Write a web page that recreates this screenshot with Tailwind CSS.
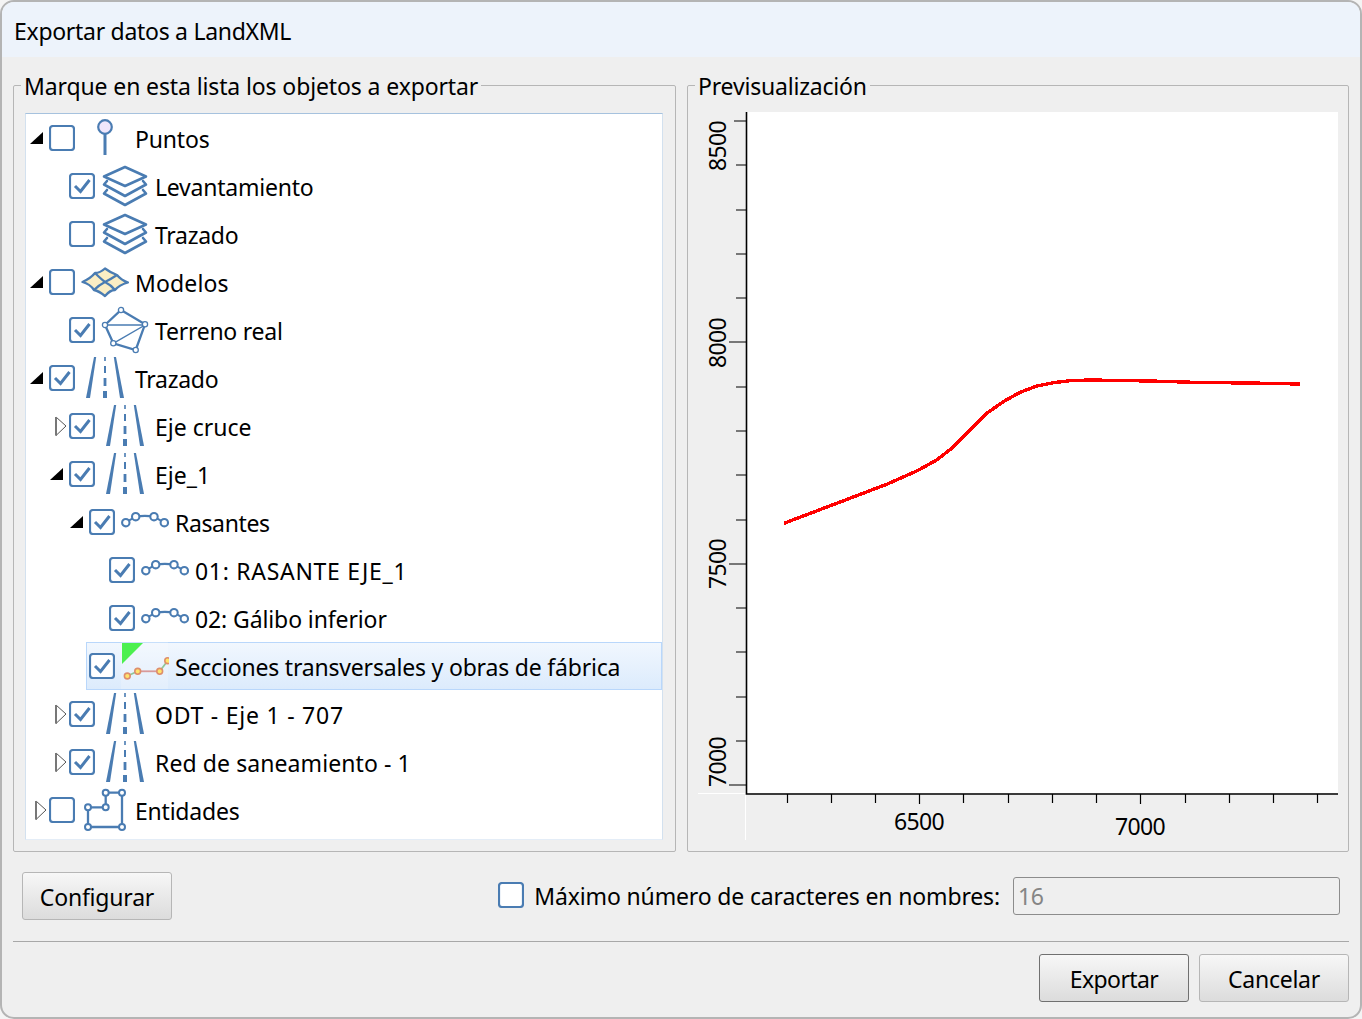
<!DOCTYPE html>
<html lang="es">
<head>
<meta charset="utf-8">
<title>Exportar datos a LandXML</title>
<script src="https://cdn.jsdelivr.net/npm/@tailwindcss/browser@4"></script>
</head>
<body class="bg-[#f4f4f4]">
<svg width="0" height="0" class="absolute">
  <defs>
    <symbol id="on" viewBox="0 0 26 26"><rect x="1" y="1" width="24" height="24" rx="3" fill="#fff" stroke="#4a7cb2" stroke-width="2.2"/><path d="M6 13 L11.5 18.5 L20.5 7" fill="none" stroke="#4a7cb2" stroke-width="3"/></symbol>
    <symbol id="off" viewBox="0 0 26 26"><rect x="1" y="1" width="24" height="24" rx="3" fill="#fff" stroke="#4a7cb2" stroke-width="2.2"/></symbol>
    <symbol id="open" viewBox="0 0 20 48"><path d="M17 18 V30 H4 Z" fill="#000"/></symbol>
    <symbol id="shut" viewBox="0 0 21 48"><path d="M10 15 V33.5 L20 24 Z" fill="#fff" stroke="#555" stroke-width="1"/><path d="M10 15 V33.5" stroke="#777" stroke-width="2"/></symbol>
    <symbol id="layers" viewBox="0 0 48 48"><g fill="none" stroke="#4a7cb2" stroke-width="2.6" stroke-linejoin="round" stroke-linecap="round"><path d="M24 5 L45 14.5 L24 24 L3 14.5 Z"/><path d="M6 19 L3 22.5 L24 34 L45 22.5 L42 19"/><path d="M6 28 L3 31.5 L24 43 L45 31.5 L42 28"/></g></symbol>
    <symbol id="road" viewBox="0 0 48 48"><g fill="#4a7cb2"><path d="M13 3 H15.2 L9 44 H5 Z"/><path d="M32.8 3 H35 L43 44 H39 Z"/><path d="M23.2 3 H24.8 V7 H23.2 Z M23 12 H25 V19 H23 Z M22.6 24 H25.4 V32 H22.6 Z M22 37 H26 V44 H22 Z"/></g></symbol>
    <symbol id="grade" viewBox="0 0 48 48"><g fill="#fff" stroke="#4a7cb2" stroke-width="2.1"><path d="M4.3 24.7 L14.7 18.7 Q24 17 33 18.7 L43.3 24.7" fill="none"/><circle cx="4.8" cy="24.7" r="3.7"/><circle cx="14.7" cy="18.7" r="3.7"/><circle cx="33" cy="18.7" r="3.7"/><circle cx="43.3" cy="24.7" r="3.7"/></g></symbol>
  </defs>
</svg>
<div class="w-[1362px] h-[1019px] flex flex-col overflow-hidden rounded-[14px] border-2 border-[#b4b4b4] bg-[#efefef] text-[23px] text-black font-['Noto_Sans','Open_Sans',sans-serif]">
  <div class="h-[55px] shrink-0 flex items-center pl-[12px] pt-[3px] bg-[#edf3fb] tracking-[-0.29px]">Exportar datos a LandXML</div>

  <div class="flex gap-[11px] mt-[28px] pl-[11px] pr-[11px]">
    <section class="relative w-[663px] h-[767px] border border-[#b6b6b6] rounded-[2px] pt-[27px] pl-[11px] pr-[12px]">
      <span class="absolute left-[7px] top-[-17px] bg-[#efefef] px-[3px] leading-[34px] whitespace-nowrap tracking-[-0.12px]">Marque en esta lista los objetos a exportar</span>
      <div class="h-[727px] bg-white border border-t-[#a6c2de] border-x-[#d3e1ef] border-b-[#e4edf7]">
        <div class="flex h-12"><svg class="w-5 h-12 shrink-0"><use href="#open"/></svg><div class="flex flex-1 items-center border border-transparent pl-[2px]"><svg class="w-[26px] h-[26px]"><use href="#off"/></svg><svg class="w-12 h-12 ml-[6px]" viewBox="0 0 48 48"><path d="M24 20 V41" stroke="#4a7cb2" stroke-width="3"/><circle cx="24" cy="13" r="6.8" fill="#efe6fb" stroke="#4a7cb2" stroke-width="2.2"/></svg><span class="ml-[6px] pt-[2px] tracking-[-0.17px]">Puntos</span></div></div>

        <div class="flex h-12 pl-5"><div class="w-5 shrink-0"></div><div class="flex flex-1 items-center border border-transparent pl-[2px]"><svg class="w-[26px] h-[26px]"><use href="#on"/></svg><svg class="w-12 h-12 ml-[6px]"><use href="#layers"/></svg><span class="ml-[6px] pt-[2px] tracking-[-0.23px]">Levantamiento</span></div></div>

        <div class="flex h-12 pl-5"><div class="w-5 shrink-0"></div><div class="flex flex-1 items-center border border-transparent pl-[2px]"><svg class="w-[26px] h-[26px]"><use href="#off"/></svg><svg class="w-12 h-12 ml-[6px]"><use href="#layers"/></svg><span class="ml-[6px] pt-[2px] tracking-[-0.29px]">Trazado</span></div></div>

        <div class="flex h-12"><svg class="w-5 h-12 shrink-0"><use href="#open"/></svg><div class="flex flex-1 items-center border border-transparent pl-[2px]"><svg class="w-[26px] h-[26px]"><use href="#off"/></svg><svg class="w-12 h-12 ml-[6px]" viewBox="0 0 48 48"><path d="M1.5 24 Q10 20 14 15 Q19 15 24 10.5 Q30 15 36 17 Q40 22 47 24.5 Q38 27 34 32 Q29 32 24 38 Q18 33 13 32 Q9 26 1.5 24 Z" fill="#fbeec4" stroke="#4a7cb2" stroke-width="2.3" stroke-linejoin="round"/><path d="M14 15 Q20 21 24 24 Q30 27 34 32 M36 17 Q30 21 24 24 Q18 27 13 32" fill="none" stroke="#4a7cb2" stroke-width="2.3"/></svg><span class="ml-[6px] pt-[2px] tracking-[0.14px]">Modelos</span></div></div>

        <div class="flex h-12 pl-5"><div class="w-5 shrink-0"></div><div class="flex flex-1 items-center border border-transparent pl-[2px]"><svg class="w-[26px] h-[26px]"><use href="#on"/></svg><svg class="w-12 h-12 ml-[6px]" viewBox="0 0 48 48"><g stroke="#4a7cb2" fill="none"><path d="M20 4 L44 18.3 L34.7 44 L12.3 37.3 L4 19 Z" stroke-width="2.3"/><path d="M4 19 H44 L12.3 37.3" stroke-width="1.4"/></g><g fill="#fff" stroke="#4a7cb2" stroke-width="1.3"><circle cx="20" cy="4" r="2.6"/><circle cx="44" cy="18.3" r="2.6"/><circle cx="34.7" cy="44" r="2.6"/><circle cx="12.3" cy="37.3" r="2.6"/><circle cx="4" cy="19" r="2.6"/></g></svg><span class="ml-[6px] pt-[2px] tracking-[-0.25px]">Terreno real</span></div></div>

        <div class="flex h-12"><svg class="w-5 h-12 shrink-0"><use href="#open"/></svg><div class="flex flex-1 items-center border border-transparent pl-[2px]"><svg class="w-[26px] h-[26px]"><use href="#on"/></svg><svg class="w-12 h-12 ml-[6px]"><use href="#road"/></svg><span class="ml-[6px] pt-[2px] tracking-[-0.29px]">Trazado</span></div></div>

        <div class="flex h-12 pl-5"><svg class="w-5 h-12 shrink-0 overflow-visible"><use href="#shut" width="21" height="48"/></svg><div class="flex flex-1 items-center border border-transparent pl-[2px]"><svg class="w-[26px] h-[26px]"><use href="#on"/></svg><svg class="w-12 h-12 ml-[6px]"><use href="#road"/></svg><span class="ml-[6px] pt-[2px]">Eje cruce</span></div></div>

        <div class="flex h-12 pl-5"><svg class="w-5 h-12 shrink-0"><use href="#open"/></svg><div class="flex flex-1 items-center border border-transparent pl-[2px]"><svg class="w-[26px] h-[26px]"><use href="#on"/></svg><svg class="w-12 h-12 ml-[6px]"><use href="#road"/></svg><span class="ml-[6px] pt-[2px]">Eje_1</span></div></div>

        <div class="flex h-12 pl-10"><svg class="w-5 h-12 shrink-0"><use href="#open"/></svg><div class="flex flex-1 items-center border border-transparent pl-[2px]"><svg class="w-[26px] h-[26px]"><use href="#on"/></svg><svg class="w-12 h-12 ml-[6px]"><use href="#grade"/></svg><span class="ml-[6px] pt-[2px] tracking-[-0.37px]">Rasantes</span></div></div>

        <div class="flex h-12 pl-[60px]"><div class="w-5 shrink-0"></div><div class="flex flex-1 items-center border border-transparent pl-[2px]"><svg class="w-[26px] h-[26px]"><use href="#on"/></svg><svg class="w-12 h-12 ml-[6px]"><use href="#grade"/></svg><span class="ml-[6px] pt-[2px] tracking-[0.7px]">01: RASANTE EJE_1</span></div></div>

        <div class="flex h-12 pl-[60px]"><div class="w-5 shrink-0"></div><div class="flex flex-1 items-center border border-transparent pl-[2px]"><svg class="w-[26px] h-[26px]"><use href="#on"/></svg><svg class="w-12 h-12 ml-[6px]"><use href="#grade"/></svg><span class="ml-[6px] pt-[2px] tracking-[-0.11px]">02: Gálibo inferior</span></div></div>

        <div class="flex h-12 pl-10"><div class="w-5 shrink-0"></div><div class="flex flex-1 items-center border border-[#b9d7fb] bg-gradient-to-b from-[#f1f7fe] to-[#dcebfc] pl-[2px]"><svg class="w-[26px] h-[26px]"><use href="#on"/></svg><svg class="w-12 h-12 ml-[6px]" viewBox="0 0 48 48"><rect x="0" y="0" width="47" height="47" fill="#fff" fill-opacity="0.2"/><path d="M1 1 H22 L1 22 Z" fill="#4cf04f"/><path d="M6.3 34 L16.7 29.3" stroke="#8fc79a" stroke-width="1.8"/><path d="M16.7 29.3 H38.7" stroke="#d89a9a" stroke-width="1.8"/><path d="M38.7 29.3 L46.7 18.7" stroke="#8fc79a" stroke-width="1.8"/><g fill="#ffe46b" stroke="#de8e6c" stroke-width="1.6"><circle cx="6.3" cy="34" r="2.9"/><circle cx="16.7" cy="29.3" r="2.9"/><circle cx="38.7" cy="29.3" r="2.9"/><circle cx="46.7" cy="18.7" r="2.9"/></g></svg><span class="ml-[6px] pt-[2px] tracking-[-0.19px]">Secciones transversales y obras de fábrica</span></div></div>

        <div class="flex h-12 pl-5"><svg class="w-5 h-12 shrink-0 overflow-visible"><use href="#shut" width="21" height="48"/></svg><div class="flex flex-1 items-center border border-transparent pl-[2px]"><svg class="w-[26px] h-[26px]"><use href="#on"/></svg><svg class="w-12 h-12 ml-[6px]"><use href="#road"/></svg><span class="ml-[6px] pt-[2px] tracking-[0.76px]">ODT - Eje 1 - 707</span></div></div>

        <div class="flex h-12 pl-5"><svg class="w-5 h-12 shrink-0 overflow-visible"><use href="#shut" width="21" height="48"/></svg><div class="flex flex-1 items-center border border-transparent pl-[2px]"><svg class="w-[26px] h-[26px]"><use href="#on"/></svg><svg class="w-12 h-12 ml-[6px]"><use href="#road"/></svg><span class="ml-[6px] pt-[2px] tracking-[0.09px]">Red de saneamiento - 1</span></div></div>

        <div class="flex h-12"><svg class="w-5 h-12 shrink-0 overflow-visible"><use href="#shut" width="21" height="48"/></svg><div class="flex flex-1 items-center border border-transparent pl-[2px]"><svg class="w-[26px] h-[26px]"><use href="#off"/></svg><svg class="w-12 h-12 ml-[6px]" viewBox="0 0 48 48"><path d="M7 21.3 H24.7 V6.7 H41 V41 H7 Z" fill="none" stroke="#4a7cb2" stroke-width="2.3"/><g fill="#fff" stroke="#4a7cb2" stroke-width="2"><circle cx="7" cy="21.3" r="3"/><circle cx="24.7" cy="21.3" r="3"/><circle cx="24.7" cy="6.7" r="3"/><circle cx="41" cy="6.7" r="3"/><circle cx="41" cy="41" r="3"/><circle cx="7" cy="41" r="3"/></g></svg><span class="ml-[6px] pt-[2px] tracking-[-0.22px]">Entidades</span></div></div>
      </div>
    </section>

    <section class="relative w-[662px] h-[767px] border border-[#b6b6b6] rounded-[2px]">
      <span class="absolute left-[7px] top-[-17px] z-10 bg-[#efefef] px-[3px] leading-[34px] whitespace-nowrap tracking-[-0.19px]">Previsualización</span>
      <svg class="block w-[660px] h-[765px]" viewBox="688 86 660 765" font-family="Noto Sans, Open Sans, sans-serif" font-size="23" letter-spacing="-0.6">
        <rect x="747" y="112" width="591" height="681" fill="#fff"/>
        <path d="M698 793.5 H745 M745.5 795 V840" stroke="#fff" stroke-width="1"/>
        <path d="M746.5 112 V794 H1338" fill="none" stroke="#000" stroke-width="1.6"/>
        <path d="M729 785 H746 M736 741 H746 M736 697 H746 M736 652 H746 M736 608 H746 M729 564 H746 M736 520 H746 M736 475 H746 M736 431 H746 M736 387 H746 M729 342 H746 M736 298 H746 M736 254 H746 M736 210 H746 M736 165 H746 M734 121 H746" stroke="#000" stroke-width="1.2"/>
        <path d="M787.5 794 V803 M831.5 794 V803 M875.5 794 V803 M919.5 794 V804 M963.5 794 V803 M1008.5 794 V803 M1052.5 794 V803 M1096.5 794 V803 M1140.5 794 V804 M1185.5 794 V803 M1229.5 794 V803 M1273.5 794 V803 M1317.5 794 V803" stroke="#000" stroke-width="1.2"/>
        <text x="919" y="830" text-anchor="middle">6500</text>
        <text x="1140" y="835" text-anchor="middle">7000</text>
        <text transform="translate(726 146) rotate(-90)" text-anchor="middle">8500</text>
        <text transform="translate(726 343) rotate(-90)" text-anchor="middle">8000</text>
        <text transform="translate(726 564) rotate(-90)" text-anchor="middle">7500</text>
        <text transform="translate(726 762) rotate(-90)" text-anchor="middle">7000</text>
        <polyline points="784,523.3 836.7,503.3 886.7,484.3 916.7,471 936.7,460 951.7,448.3 970,430 986.7,413.3 1003.3,401.7 1020,392.3 1036.7,386 1053.3,382.7 1070,380.7 1090,380 1150,381 1200,382.5 1250,383 1300,384" fill="none" stroke="#f00" stroke-width="3.4" stroke-linejoin="round" shape-rendering="crispEdges"/>
      </svg>
    </section>
  </div>

  <div class="flex items-center justify-between mt-[20px] ml-[20px] mr-[20px] h-12">
    <button class="w-[150px] h-12 pt-[2px] rounded-[3px] border border-[#b6b6b6] bg-gradient-to-b from-[#f7f7f7] to-[#dcdcdc] tracking-[-0.2px]">Configurar</button>
    <div class="flex items-center">
      <svg class="w-[26px] h-[26px] mb-[2px]"><use href="#off"/></svg>
      <span class="ml-[10px] tracking-[-0.15px]">Máximo número de caracteres en nombres:</span>
      <div class="ml-[13px] w-[327px] h-[38px] flex items-center pl-[4px] border border-[#8c8c8c] rounded-[3px] text-[#858585] tracking-[-0.3px]">16</div>
    </div>
  </div>

  <div class="mt-[21px] mx-[11px] h-px bg-[#a8a8a8]"></div>

  <div class="flex justify-end gap-[10px] mt-[12px] mr-[11px]">
    <button class="w-[150px] h-12 pt-[2px] rounded-[3px] border border-[#707070] bg-gradient-to-b from-[#f7f7f7] to-[#dcdcdc] tracking-[-0.6px]">Exportar</button>
    <button class="w-[150px] h-12 pt-[2px] rounded-[3px] border border-[#b6b6b6] bg-gradient-to-b from-[#f7f7f7] to-[#dcdcdc] tracking-[-0.25px]">Cancelar</button>
  </div>
</div>
</body>
</html>
